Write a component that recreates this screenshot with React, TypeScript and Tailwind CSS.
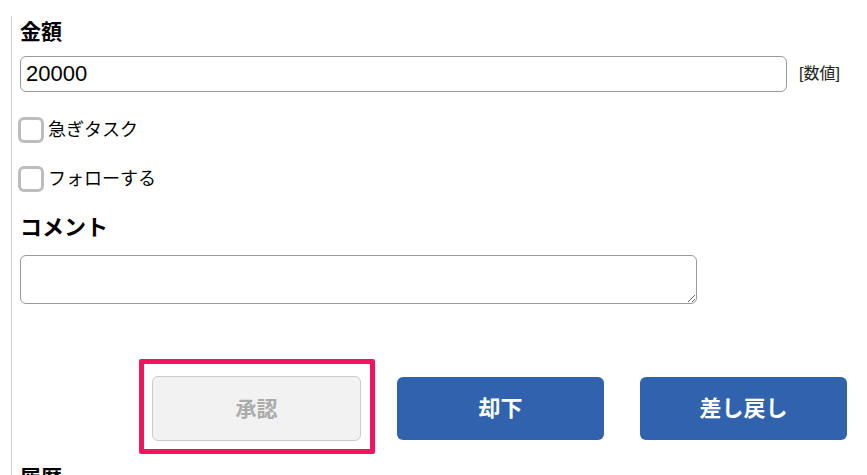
const Checkbox = ({ label, className }: { label: string; className: string }) => (
  <label className={`flex items-center h-[26px] -ml-[2px] ${className}`}>
    <span className="w-[26px] h-[26px] border-[3px] border-[#bdbdbd] rounded-[6px] bg-white shrink-0" />
    <span className="ml-[4px] text-[18px] leading-[26px] text-black">{label}</span>
  </label>
);

const App = () => {
  return (
    <div className="w-[867px] h-[475px] overflow-hidden bg-white pl-[11px] font-['Liberation_Sans','Noto_Sans_CJK_JP',sans-serif]">
      <div className="h-full border-l border-[#cfcfcf] pl-[8px]">
        <h3 className="mt-[16px] h-[32px] leading-[32px] text-[21px] font-bold text-black">金額</h3>
        <div className="mt-[8px] flex items-center">
          <input
            readOnly
            value="20000"
            className="w-[767px] h-[36px] border border-[#9a9a9a] rounded-[6px] pl-[5px] text-[22px] text-black outline-none"
          />
          <span className="ml-[12px] text-[16px] text-[#222]">[数値]</span>
        </div>
        <Checkbox label="急ぎタスク" className="mt-[25px]" />
        <Checkbox label="フォローする" className="mt-[23px]" />
        <h3 className="mt-[20px] h-[32px] leading-[32px] text-[22px] font-bold text-black">コメント</h3>
        <textarea className="block mt-[11px] w-[677px] h-[49px] border border-[#9a9a9a] rounded-[6px] outline-none" />
        <div className="mt-[72px] ml-[132px] flex items-center gap-[36px]">
          <div className="relative">
            <button
              disabled
              className="w-[209px] h-[65px] rounded-[6px] border border-[#cccccc] bg-[#f2f2f2] text-[21px] font-bold text-[#ababab]"
            >
              承認
            </button>
            <div className="absolute -left-[13px] -top-[17px] w-[236px] h-[95px] border-[5px] border-[#f2145c] rounded-[2px] pointer-events-none" />
          </div>
          <button className="w-[207px] h-[63px] rounded-[6px] bg-[#3062ad] text-[22px] font-bold text-white">
            却下
          </button>
          <button className="w-[207px] h-[63px] rounded-[6px] bg-[#3062ad] text-[22px] font-bold text-white">
            差し戻し
          </button>
        </div>
        <h3 className="mt-[21px] h-[32px] leading-[32px] text-[21px] font-bold text-black">履歴</h3>
      </div>
    </div>
  );
};

export default App;
